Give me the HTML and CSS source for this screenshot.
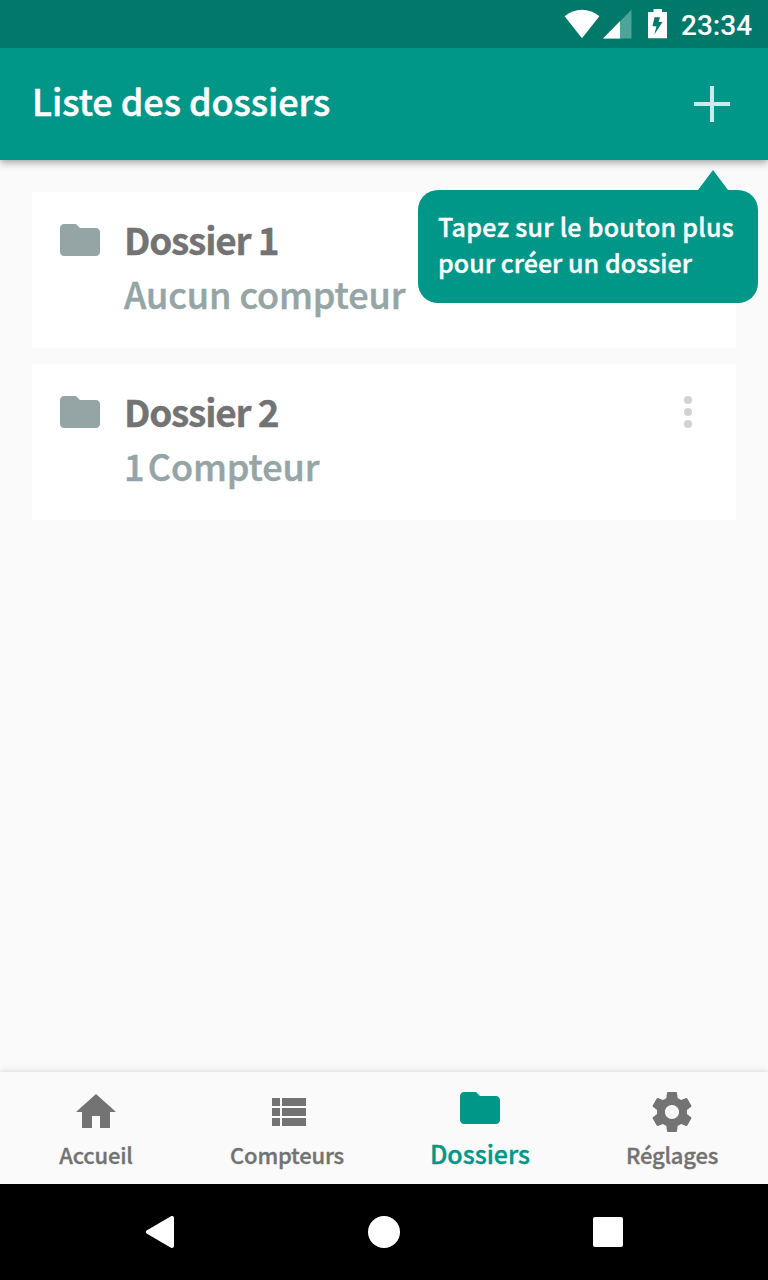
FILE: index.html
```html
<!DOCTYPE html>
<html lang="fr">
<head>
<meta charset="utf-8">
<title>Liste des dossiers</title>
<link rel="stylesheet" href="styles.css">
</head>
<body>
<div class="screen">
  <div class="status-bar">
    <svg class="signals" width="104" height="30" viewBox="564 9 104 30">
      <path fill="#fff" d="M582 38.2 564.6 16.2C569.6 12 575.6 9.8 582 9.8s12.400 2.200 17.400 6.400z"/>
      <path fill="#4fa49a" d="M631.500 9.800V38.500H603z"/>
      <path fill="#fff" d="M620 21.200V38.500H603z"/>
      <path fill="#fff" fill-rule="evenodd" d="M653.500 9h8.500v3h5v26.300h-19V12h5.500zM654.500 17.200H660L658.500 22H662.500L654.300 34.500 656.500 26.300H652.500z"/>
    </svg>
    <span class="clock">23:34</span>
  </div>
  <header class="app-bar">
    <h1 class="app-title">Liste des dossiers</h1>
    <svg class="plus" width="36" height="36" viewBox="0 0 36 36"><path d="M16 0h4v16h16v4H20v16h-4V20H0v-4h16z"/></svg>
    <div class="tooltip"><span class="wide">Tapez sur le bouton plus</span><br>pour créer un dossier</div>
  </header>
  <main class="list">
    <article class="card">
      <svg class="icon" viewBox="0 0 24 24"><path d="M10 4H4c-1.100 0-1.990.9-1.990 2L2 18c0 1.100.9 2 2 2h16c1.100 0 2-.9 2-2V8c0-1.100-.9-2-2-2h-8l-2-2z"/></svg>
      <div class="card-text">
        <h2 class="card-title">Dossier 1</h2>
        <p class="card-sub">Aucun compteur</p>
      </div>
    </article>
    <article class="card">
      <svg class="icon" viewBox="0 0 24 24"><path d="M10 4H4c-1.100 0-1.990.9-1.990 2L2 18c0 1.100.9 2 2 2h16c1.100 0 2-.9 2-2V8c0-1.100-.9-2-2-2h-8l-2-2z"/></svg>
      <div class="card-text">
        <h2 class="card-title">Dossier 2</h2>
        <p class="card-sub"><span class="count">1 </span>Compteur</p>
      </div>
      <svg class="icon more" viewBox="0 0 24 24"><circle cx="12" cy="6" r="2"/><circle cx="12" cy="12" r="2"/><circle cx="12" cy="18" r="2"/></svg>
    </article>
  </main>
  <nav class="tabs">
    <a class="tab"><svg class="icon" viewBox="0 0 24 24"><path d="M10 20v-6h4v6h5v-8h3L12 3 2 12h3v8z"/></svg><span class="tab-label">Accueil</span></a>
    <a class="tab"><svg class="icon" viewBox="0 0 24 24"><path d="M4 14h4v-4H4v4zm0 5h4v-4H4v4zM4 9h4V5H4v4zm5 5h12v-4H9v4zm0 5h12v-4H9v4zM9 5v4h12V5H9z"/></svg><span class="tab-label counters">Compteurs</span></a>
    <a class="tab active"><svg class="icon" viewBox="0 0 24 24"><path d="M10 4H4c-1.100 0-1.990.9-1.990 2L2 18c0 1.100.9 2 2 2h16c1.100 0 2-.9 2-2V8c0-1.100-.9-2-2-2h-8l-2-2z"/></svg><span class="tab-label">Dossiers</span></a>
    <a class="tab"><svg class="icon" viewBox="0 0 24 24"><path d="M19.430 12.980c.04-.32.07-.64.07-.98s-.03-.66-.07-.98l2.110-1.650c.19-.15.24-.42.12-.64l-2-3.460c-.12-.22-.39-.3-.61-.22l-2.490 1c-.52-.4-1.080-.73-1.690-.98l-.38-2.650C14.460 2.180 14.250 2 14 2h-4c-.25 0-.46.18-.49.42l-.38 2.650c-.61.25-1.170.59-1.690.98l-2.490-1c-.23-.09-.49 0-.61.22l-2 3.460c-.13.22-.07.49.12.64l2.110 1.650c-.04.32-.07.65-.07.98s.03.66.07.98l-2.110 1.650c-.19.15-.24.42-.12.64l2 3.460c.12.22.39.3.61.22l2.490-1c.52.4 1.080.73 1.690.98l.38 2.650c.03.24.24.42.49.42h4c.25 0 .46-.18.49-.42l.38-2.650c.61-.25 1.170-.59 1.690-.98l2.490 1c.23.09.49 0 .61-.22l2-3.460c.12-.22.07-.49-.12-.64l-2.110-1.650zM12 15.500c-1.930 0-3.500-1.570-3.500-3.500s1.570-3.500 3.500-3.500 3.500 1.570 3.500 3.500-1.570 3.500-3.500 3.500z"/></svg><span class="tab-label">Réglages</span></a>
  </nav>
  <div class="system-nav">
    <svg width="32" height="32" viewBox="0 0 32 32"><path class="back" d="M28 2v28L4 16z"/></svg>
    <svg width="32" height="32" viewBox="0 0 32 32"><circle cx="16" cy="16" r="16"/></svg>
    <svg width="32" height="32" viewBox="0 0 32 32"><rect x="1" y="1" width="30" height="30" rx="2"/></svg>
  </div>
</div>
</body>
</html>
```
FILE: styles.css
```css
* { box-sizing: border-box; }
body { margin: 0; font-family: "Noto Sans CJK SC", "Noto Sans CJK JP", sans-serif; }
h1, h2, p { margin: 0; white-space: nowrap; }
svg { display: block; flex: none; }
.screen { width: 768px; height: 1280px; display: flex; flex-direction: column; background: #fafafa; overflow: hidden; }
.status-bar { position: relative; z-index: 2; height: 48px; flex: none; background: #00796b; display: flex; justify-content: flex-end; align-items: flex-start; padding: 9px 16px 0 0; gap: 13px; }
.clock { width: 71px; font: 500 28px/33px Roboto, sans-serif; color: #fff; white-space: nowrap; }
.app-bar { position: relative; z-index: 1; height: 112px; flex: none; background: #009688; box-shadow: 0 2px 8px rgba(0,0,0,.4); display: flex; align-items: center; justify-content: space-between; padding: 0 38px 0 32px; }
.app-title { margin-bottom: 8px; font-size: 36px; line-height: 52px; font-weight: 500; letter-spacing: -.06px; color: #fff; -webkit-text-stroke: .5px; }
.plus { fill: #cceae7; }
.tooltip { position: absolute; left: 418px; top: 142px; width: 340px; height: 113px; padding: 18px 20px; border-radius: 20px; background: #009688; color: #fff; font-size: 25px; line-height: 36px; font-weight: 500; letter-spacing: .05px; white-space: nowrap; -webkit-text-stroke: .4px; }
.wide { letter-spacing: .28px; }
.tooltip::before { content: ""; position: absolute; left: 280px; top: -20px; border: solid transparent; border-width: 0 15px 20px; border-bottom-color: #009688; }
.list { flex: 1; padding: 32px; display: flex; flex-direction: column; gap: 16px; }
.card { height: 156px; background: #fff; padding: 24px; display: flex; align-items: flex-start; }
.icon { width: 48px; height: 48px; fill: currentColor; }
.card .icon { color: #95a5a6; }
.card-text { flex: 1; margin-left: 20px; }
.card-title { font-size: 37px; line-height: 46px; font-weight: 700; color: #737373; letter-spacing: -1.200px; -webkit-text-stroke: .3px; }
.card-sub { padding-top: 4px; font-size: 36px; line-height: 54px; font-weight: 500; letter-spacing: -.1px; color: #95a5a6; -webkit-text-stroke: .5px; }
.count { letter-spacing: -2.400px; }
.card .more { color: #d2d2d2; }
.tabs { height: 112px; flex: none; background: #fafafa; box-shadow: 0 -1px 6px rgba(0,0,0,.13); display: flex; }
.tab { flex: 1; display: flex; flex-direction: column; align-items: center; padding-top: 16px; color: #737373; }
.tab-label { font-size: 22px; line-height: 36px; font-weight: 500; letter-spacing: -.2px; -webkit-text-stroke: .35px; }
.counters { margin-right: 2px; }
.active { padding-top: 12px; color: #009688; }
.active .tab-label { font-size: 25px; line-height: 42px; letter-spacing: 0; }
.system-nav { height: 96px; flex: none; background: #000; display: flex; align-items: center; justify-content: space-between; padding: 0 144px; }
.system-nav svg { fill: #fff; }
.back { stroke: #fff; stroke-width: 4px; stroke-linejoin: round; }
```
